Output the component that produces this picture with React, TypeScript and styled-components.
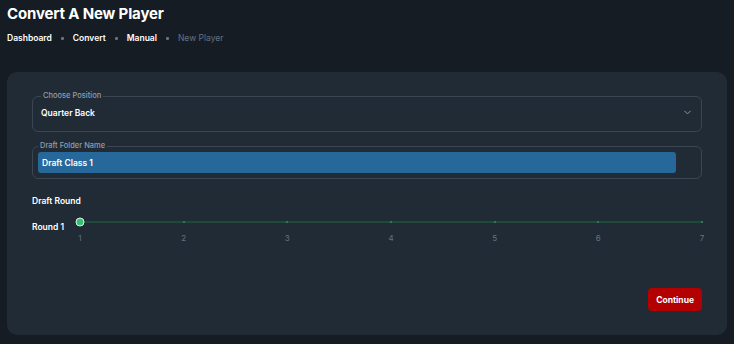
import { ChevronDown } from "lucide-react";
import styled, { createGlobalStyle } from "styled-components";

const GlobalStyle = createGlobalStyle`
  html, body {
    margin: 0;
    padding: 0;
    background: #161c24;
    font-family: Inter, "Noto Sans", sans-serif;
    color: #ffffff;
  }
`;

const rounds = [1, 2, 3, 4, 5, 6, 7];

const App = () => {
  return (
    <>
      <GlobalStyle />
      <StPage>
        <StTitle>Convert A New Player</StTitle>
        <StCrumbs>
          <StCrumb>Dashboard</StCrumb>
          <StDot />
          <StCrumb>Convert</StCrumb>
          <StDot />
          <StCrumb>Manual</StCrumb>
          <StDot />
          <StCrumb $muted>New Player</StCrumb>
        </StCrumbs>

        <StCard>
          <StField>
            <StLegend>Choose Position</StLegend>
            <StSelectRow>
              <span>Quarter Back</span>
              <ChevronDown size={11} color="#919eab" strokeWidth={2} />
            </StSelectRow>
          </StField>

          <StField $tight>
            <StLegend>Draft Folder Name</StLegend>
            <StInput defaultValue="Draft Class 1" />
          </StField>

          <StSectionLabel>Draft Round</StSectionLabel>
          <StSliderRow>
            <StRoundLabel>Round 1</StRoundLabel>
            <StSlider>
              <StTrack>
                {rounds.map((r, i) => (
                  <StTick key={r} style={{ left: `${(i / (rounds.length - 1)) * 100}%` }} />
                ))}
                <StThumb />
              </StTrack>
              <StMarks>
                {rounds.map((r, i) => (
                  <StMark key={r} style={{ left: `${(i / (rounds.length - 1)) * 100}%` }}>
                    {r}
                  </StMark>
                ))}
              </StMarks>
            </StSlider>
          </StSliderRow>

          <StFooter>
            <StButton>Continue</StButton>
          </StFooter>
        </StCard>
      </StPage>
    </>
  );
};

export default App;

const StPage = styled.div`
  padding: 5px 7px 9px;
`;

const StTitle = styled.h1`
  margin: 0;
  font-size: 15px;
  font-weight: 700;
  line-height: 18px;
  letter-spacing: -0.15px;
`;

const StCrumbs = styled.div`
  display: flex;
  align-items: center;
  gap: 9px;
  margin-top: 8px;
  height: 14px;
`;

const StCrumb = styled.span<{ $muted?: boolean }>`
  font-size: 8.5px;
  font-weight: ${p => (p.$muted ? 400 : 600)};
  color: ${p => (p.$muted ? "#637381" : "#ffffff")};
`;

const StDot = styled.span`
  width: 3px;
  height: 3px;
  border-radius: 1px;
  background: #637381;
`;

const StCard = styled.div`
  margin-top: 27px;
  background: #212b36;
  border-radius: 10px;
  padding: 19px 25px 24px;
`;

const StField = styled.fieldset<{ $tight?: boolean }>`
  margin: 0 0 9px;
  border: 1px solid #3a4652;
  border-radius: 6px;
  padding: ${p => (p.$tight ? "1px 5px 5px" : "5px 8px 13px")};
  min-width: 0;
`;

const StLegend = styled.legend`
  font-size: 7.5px;
  font-weight: 500;
  color: #919eab;
  padding: 0 2px;
  margin-left: 0;
  line-height: 10px;
`;

const StSelectRow = styled.div`
  display: flex;
  justify-content: space-between;
  align-items: center;
  font-size: 8.5px;
  font-weight: 600;
  padding-top: 1px;
  padding-right: 0;
`;

const StInput = styled.input`
  display: block;
  box-sizing: border-box;
  width: calc(100% - 20px);
  height: 21px;
  border: none;
  outline: none;
  border-radius: 3px;
  background: #266899;
  color: #ffffff;
  font-family: inherit;
  font-size: 8.5px;
  font-weight: 600;
  padding: 0 4px;
`;

const StSectionLabel = styled.div`
  margin-top: 16px;
  font-size: 8.5px;
  font-weight: 600;
  line-height: 12px;
`;

const StSliderRow = styled.div`
  display: flex;
  align-items: flex-start;
  margin-top: 10px;
`;

const StRoundLabel = styled.div`
  width: 48px;
  flex-shrink: 0;
  font-size: 8.5px;
  font-weight: 600;
  padding-top: 5px;
`;

const StSlider = styled.div`
  flex: 1;
  padding-top: 4px;
`;

const StTrack = styled.div`
  position: relative;
  height: 2px;
  background: #1e4a3b;
`;

const StTick = styled.span`
  position: absolute;
  top: 0;
  width: 2px;
  height: 2px;
  margin-left: -1px;
  background: #2a7a55;
`;

const StThumb = styled.span`
  position: absolute;
  left: 0;
  top: 50%;
  width: 7px;
  height: 7px;
  border-radius: 50%;
  background: #2ec26a;
  border: 1px solid #e8ecef;
  transform: translate(-50%, -50%);
`;

const StMarks = styled.div`
  position: relative;
  height: 12px;
  margin-top: 10px;
`;

const StMark = styled.span`
  position: absolute;
  top: 0;
  transform: translateX(-50%);
  font-size: 8px;
  color: #637381;
`;

const StFooter = styled.div`
  display: flex;
  justify-content: flex-end;
  margin-top: 43px;
`;

const StButton = styled.button`
  height: 23px;
  padding: 0 8px;
  border: none;
  border-radius: 4px;
  background: #b30000;
  color: #ffffff;
  font-family: inherit;
  font-size: 8.5px;
  font-weight: 700;
`;
